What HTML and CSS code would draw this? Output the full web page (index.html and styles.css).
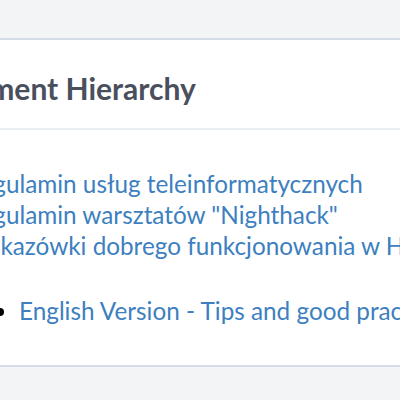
FILE: index.html
```html
<!DOCTYPE html>
<html lang="pl">
<head>
  <meta charset="UTF-8" />
  <meta name="viewport" content="width=device-width, initial-scale=1.0" />
  <title>Document Hierarchy</title>
  <link rel="stylesheet" href="styles.css">
</head>
<body>

  <div class="page-top"></div>

  <section class="card">
    <div class="card-header">
      <h2>Document Hierarchy</h2>
    </div>
    <div class="card-body">
      <ul class="doc-tree">
        <li><a href="#">Regulamin usług teleinformatycznych</a></li>
        <li><a href="#">Regulamin warsztatów "Nighthack"</a></li>
        <li>
          <a href="#">Wskazówki dobrego funkcjonowania w Hackerspace</a>
          <ul>
            <li><a href="#">English Version - Tips and good practices</a></li>
          </ul>
        </li>
      </ul>
    </div>
  </section>

</body>
</html>
```

FILE: styles.css
```css
body {
  font-family: 'Lato', 'Open Sans', sans-serif;
  margin: 0;
  background-color: #f3f4f6;
  color: #000;
  overflow: hidden;
}

.page-top {
  height: 38px;
}

.card {
  margin-left: -100px;
  background-color: #fff;
  border-top: 2px solid #d3dde7;
  border-bottom: 2px solid #d3dde7;
}

.card-header {
  padding: 32px 0 24px 18px;
  border-bottom: 2px solid #e9eef3;
}
.card-header h2 {
  margin: 0;
  font-size: 30px;
  line-height: 32px;
  font-weight: 700;
  color: #4a4f5e;
  white-space: nowrap;
}

.card-body {
  padding: 38px 0 39px;
}

.doc-tree {
  margin: 0;
  padding-left: 66px;
  font-size: 24.3px;
  line-height: 31px;
  white-space: nowrap;
}
.doc-tree ul {
  margin: 34px 0 0;
  padding-left: 53px;
  list-style: disc;
}
.doc-tree a {
  color: #3d7fc0;
  text-decoration: none;
}
```
